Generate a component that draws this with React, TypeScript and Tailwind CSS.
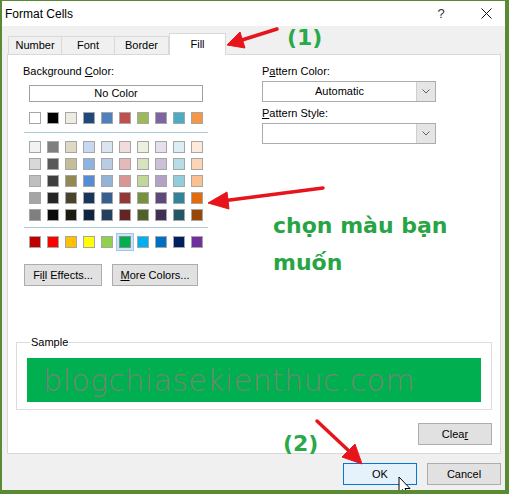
import React from 'react';

const themeTop = ['#FFFFFF', '#000000', '#EEECE1', '#1F497D', '#4F81BD', '#C0504D', '#9BBB59', '#8064A2', '#4BACC6', '#F79646'];

const themeShades = [
  ['#F2F2F2', '#7F7F7F', '#DDD9C3', '#C6D9F0', '#DBE5F1', '#F2DCDB', '#EBF1DD', '#E5E0EC', '#DBEEF3', '#FDEADA'],
  ['#D8D8D8', '#595959', '#C4BD97', '#8DB3E2', '#B8CCE4', '#E5B9B7', '#D7E3BC', '#CCC1D9', '#B7DDE8', '#FBD5B5'],
  ['#BFBFBF', '#3F3F3F', '#938953', '#548DD4', '#95B3D7', '#D99694', '#C3D69B', '#B2A2C7', '#92CDDC', '#FAC08F'],
  ['#A5A5A5', '#262626', '#494429', '#17365D', '#366092', '#953734', '#76923C', '#5F497A', '#31859B', '#E36C09'],
  ['#7F7F7F', '#0C0C0C', '#1D1B10', '#0F243E', '#244061', '#632423', '#4F6128', '#3F3151', '#205867', '#974806'],
];

const standard = ['#C00000', '#FF0000', '#FFC000', '#FFFF00', '#92D050', '#00B050', '#00B0F0', '#0070C0', '#002060', '#7030A0'];

function Swatch({ color, selected }: { color: string; selected?: boolean }) {
  return (
    <div
      className={
        selected
          ? 'w-[12px] h-[12px] border border-[#8c8c8c] shadow-[0_0_0_2px_#cce4f7,0_0_0_3px_#99c9ef]'
          : 'w-[12px] h-[12px] border border-[#a6a6a6]'
      }
      style={{ backgroundColor: color }}
    />
  );
}

function SwatchRow({ colors, selectedIndex }: { colors: string[]; selectedIndex?: number }) {
  return (
    <div className="flex gap-[6px] ml-[6px]">
      {colors.map((c, i) => (
        <Swatch key={i} color={c} selected={i === selectedIndex} />
      ))}
    </div>
  );
}

function Dropdown({ value }: { value?: string }) {
  return (
    <div className="flex w-[174px] h-[21px] border border-[#acacac] bg-white">
      <div className="flex-1 flex items-center justify-center">{value}</div>
      <div className="w-[19px] flex items-center justify-center bg-[#e5e5e5] border-l border-[#cfcfcf]">
        <svg width="8" height="5" viewBox="0 0 8 5">
          <path d="M0.5 0.5 L4 4 L7.5 0.5" fill="none" stroke="#606060" strokeWidth="1" />
        </svg>
      </div>
    </div>
  );
}

function Button({ children, primary, className }: { children: React.ReactNode; primary?: boolean; className?: string }) {
  return (
    <div
      className={
        'h-[22px] flex items-center justify-center border ' +
        (primary ? 'bg-[#e5f1fb] border-[#0078d7] ' : 'bg-[#e1e1e1] border-[#adadad] ') +
        (className ?? '')
      }
    >
      {children}
    </div>
  );
}

export default function App() {
  return (
    <div className="relative w-[509px] h-[494px] border-l-2 border-t border-r-4 border-b-4 border-[#5b8a34] bg-[#f0f0f0] font-['Liberation_Sans',Arial,sans-serif] text-[11px] text-black overflow-hidden">
      {/* title bar */}
      <div className="h-[25px] bg-white flex items-center">
        <span className="pl-[3px] text-[12px]">Format Cells</span>
        <span className="ml-auto mr-[19px] w-[14px] text-center text-[13px] text-[#333]">?</span>
        <div className="w-[38px] flex justify-center">
          <svg width="11" height="11" viewBox="0 0 11 11">
            <path d="M0.5 0.5 L10.5 10.5 M10.5 0.5 L0.5 10.5" stroke="#111" strokeWidth="1" />
          </svg>
        </div>
      </div>

      {/* tabs */}
      <div className="h-[28px] flex items-end pl-[6px]">
        <div className="w-[54px] h-[18px] flex items-center justify-center border border-b-0 border-[#d9d9d9]">Number</div>
        <div className="w-[53px] h-[18px] flex items-center justify-center border border-l-0 border-b-0 border-[#d9d9d9]">Font</div>
        <div className="w-[54px] h-[18px] flex items-center justify-center border border-l-0 border-b-0 border-[#d9d9d9]">Border</div>
        <div className="relative z-10 -mb-px w-[57px] h-[22px] flex items-center justify-center bg-white border border-b-0 border-[#d9d9d9]">Fill</div>
      </div>

      {/* panel */}
      <div className="ml-[5px] w-[494px] h-[400px] bg-white border border-[#d9d9d9] flex flex-col">
        <div className="flex pl-[15px] pt-[8px]">
          {/* left column */}
          <div className="w-[239px] flex flex-col">
            <div className="leading-[16px]">
              Background <u>C</u>olor:
            </div>
            <div className="mt-[6px] ml-[6px] w-[174px] h-[17px] border border-[#a0a0a0] flex items-center justify-center">No Color</div>
            <div className="mt-[10px]">
              <SwatchRow colors={themeTop} />
            </div>
            <div className="mt-[8px] ml-[1px] w-[184px] h-px bg-[#a9cbdc]" />
            <div className="mt-[8px] flex flex-col gap-[5px]">
              {themeShades.map((row, i) => (
                <SwatchRow key={i} colors={row} />
              ))}
            </div>
            <div className="mt-[6px] ml-[1px] w-[184px] h-px bg-[#a9cbdc]" />
            <div className="mt-[8px]">
              <SwatchRow colors={standard} selectedIndex={5} />
            </div>
            <div className="mt-[16px] ml-[1px] flex gap-[10px]">
              <Button className="w-[78px] h-[21px]">
                Fi<u>l</u>l Effects...
              </Button>
              <Button className="w-[86px] h-[21px]">
                <u>M</u>ore Colors...
              </Button>
            </div>
          </div>

          {/* right column */}
          <div className="flex flex-col">
            <div className="leading-[16px]">
              P<u>a</u>ttern Color:
            </div>
            <div className="mt-[2px]">
              <Dropdown value="Automatic" />
            </div>
            <div className="mt-[3px] leading-[16px]">
              <u>P</u>attern Style:
            </div>
            <div className="mt-[2px]">
              <Dropdown />
            </div>
          </div>
        </div>

        {/* sample */}
        <fieldset className="mt-[48px] ml-[8px] w-[476px] border border-[#dcdcdc] px-[10px] pt-[8px] pb-[7px]">
          <legend className="ml-[3px] px-[1px] leading-[16px]">Sample</legend>
          <div className="h-[44px] bg-[#00b050] flex items-center pl-[16px]">
            <span className="font-['DejaVu_Sans',sans-serif] font-extralight text-[30px] text-[#728670] tracking-[0.4px]">blogchiasekienthuc.com</span>
          </div>
        </fieldset>

        <div className="mt-[13px] mr-[8px] flex justify-end">
          <Button className="w-[74px] h-[21px]">
            Clea<u>r</u>
          </Button>
        </div>
      </div>

      {/* dialog buttons */}
      <div className="mt-[9px] ml-[5px] w-[494px] flex justify-end gap-[10px]">
        <Button primary className="w-[74px]">OK</Button>
        <Button className="w-[74px]">Cancel</Button>
      </div>

      {/* annotations */}
      <span className="absolute left-[285px] top-[20px] font-['DejaVu_Sans',sans-serif] font-bold text-[22px] text-[#2aa84a]">(1)</span>
      <div className="absolute left-[271px] top-[206px] font-['DejaVu_Sans',sans-serif] font-bold text-[22px] leading-[37px] text-[#27a545]">
        <div>chọn màu bạn</div>
        <div>muốn</div>
      </div>
      <span className="absolute left-[281px] top-[426px] font-['DejaVu_Sans',sans-serif] font-bold text-[22px] text-[#2aa84a]">(2)</span>

      <svg className="absolute -left-[2px] -top-px pointer-events-none" width="509" height="494" viewBox="0 0 509 494">
        <g fill="#e8141c" stroke="#e8141c">
          <line x1="277" y1="29" x2="242" y2="40" strokeWidth="3.5" strokeLinecap="round" />
          <polygon points="227,45 245,48 240,32" strokeWidth="1" />
          <line x1="323" y1="188" x2="226" y2="200.5" strokeWidth="3.5" strokeLinecap="round" />
          <polygon points="208,203 229,209 227,192" strokeWidth="1" />
          <line x1="317" y1="421" x2="349" y2="451" strokeWidth="3.5" strokeLinecap="round" />
          <polygon points="362,464 342,457 355,444" strokeWidth="1" />
        </g>
        <path
          d="M399 477 L399 493 L402.5 489.5 L405.5 495 L408 494 L405 488.5 L410 488.5 Z"
          fill="#fff"
          stroke="#000"
          strokeWidth="1"
          strokeLinejoin="round"
        />
      </svg>
    </div>
  );
}
